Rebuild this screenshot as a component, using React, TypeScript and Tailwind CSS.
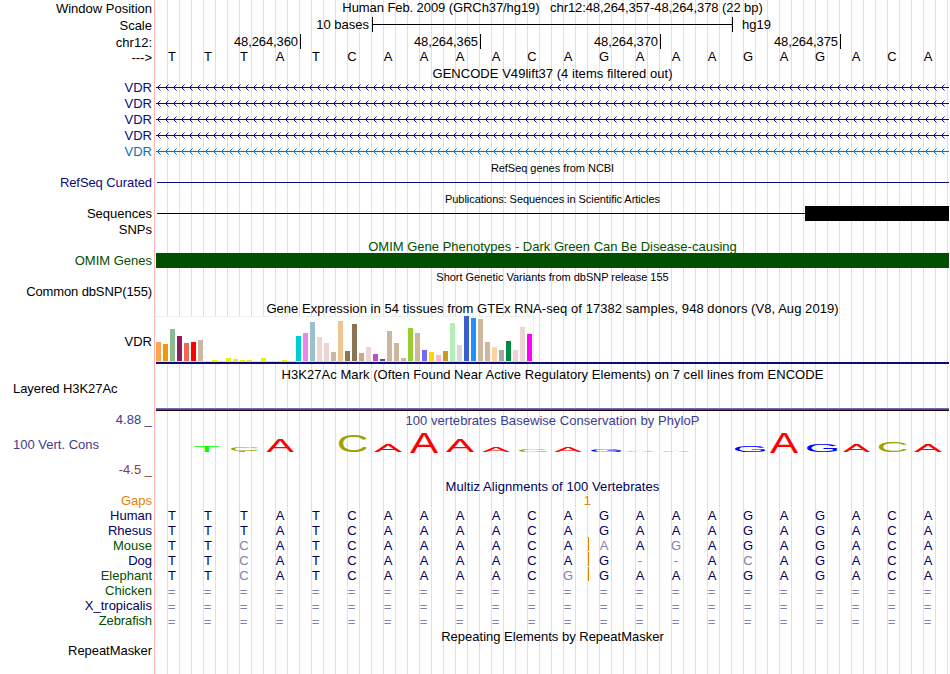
import React from "react";

type Line = { mt: string; text: string; cls?: string };

const NAVY = "text-[#0c0c78]";
const DARK = "text-[#000060]";
const GREEN = "text-[#005000]";

// Side labels, top to bottom; mt is the gap above each 15px line.
const LABELS: Line[] = [
  { mt: "mt-px", text: "Window Position" },
  { mt: "mt-[2px]", text: "Scale" },
  { mt: "mt-[2px]", text: "chr12:" },
  { mt: "mt-0", text: "--->" },
  { mt: "mt-[15px]", text: "VDR", cls: NAVY },
  { mt: "mt-px", text: "VDR", cls: NAVY },
  { mt: "mt-px", text: "VDR", cls: NAVY },
  { mt: "mt-px", text: "VDR", cls: NAVY },
  { mt: "mt-px", text: "VDR", cls: "text-[#1070b0]" },
  { mt: "mt-4", text: "RefSeq Curated", cls: "tracking-[-0.08px] text-[#0c0c78]" },
  { mt: "mt-4", text: "Sequences" },
  { mt: "mt-px", text: "SNPs" },
  { mt: "mt-4", text: "OMIM Genes", cls: GREEN },
  { mt: "mt-4", text: "Common dbSNP(155)", cls: "tracking-[-0.12px]" },
  { mt: "mt-[35px]", text: "VDR" },
  { mt: "mt-8", text: "Layered H3K27Ac", cls: "self-start ml-[13px] tracking-[-0.07px]" },
  { mt: "mt-4", text: "4.88 _", cls: "text-[#3c3c8c]" },
  { mt: "mt-[10px]", text: "100 Vert. Cons", cls: "self-start ml-[13px] text-[#3c3c8c]" },
  { mt: "mt-[10px]", text: "-4.5 _", cls: "text-[#8c3c3c]" },
  { mt: "mt-4", text: "Gaps", cls: "text-[#e68200]" },
  { mt: "mt-0", text: "Human", cls: DARK },
  { mt: "mt-0", text: "Rhesus", cls: DARK },
  { mt: "mt-0", text: "Mouse", cls: GREEN },
  { mt: "mt-0", text: "Dog", cls: DARK },
  { mt: "mt-0", text: "Elephant", cls: GREEN },
  { mt: "mt-0", text: "Chicken", cls: GREEN },
  { mt: "mt-0", text: "X_tropicalis", cls: DARK },
  { mt: "mt-0", text: "Zebrafish", cls: "tracking-[-0.1px] text-[#005000]" },
  { mt: "mt-[15px]", text: "RepeatMasker", cls: "tracking-[-0.05px]" },
];

const SEQ = "TTTATCAAAACAGAAAGAGACA";

// Lower-case letters mark bases that differ from human.
const ALIGN: { seq: string; gap?: boolean }[] = [
  { seq: "TTTATCAAAACAGAAAGAGACA" },
  { seq: "TTTATCAAAACAGAAAGAGACA" },
  { seq: "TTcATCAAAACAaAgAGAGACA", gap: true },
  { seq: "TTcATCAAAACAG--AcAGACA", gap: true },
  { seq: "TTcATCAAAACgGAAAGAGACA", gap: true },
  { seq: "======================" },
  { seq: "======================" },
  { seq: "======================" },
];

const BARS: [number, string][] = [
  [19, "#ffa54f"], [17, "#ee9a00"], [32, "#8fbc8f"], [25, "#8b1c62"], [18, "#ee6a50"],
  [19, "#ff0000"], [21, "#cdb79e"], [0, "#eeee00"], [1, "#eeee00"], [0, "#eeee00"],
  [3, "#eeee00"], [2, "#eeee00"], [1, "#eeee00"], [1, "#eeee00"], [0, "#eeee00"],
  [3, "#eeee00"], [0, "#eeee00"], [0, "#eeee00"], [1, "#eeee00"], [0, "#eeee00"],
  [25, "#00cdcd"], [28, "#ee82ee"], [39, "#9ac0cd"], [24, "#eed5d2"], [18, "#eed5d2"],
  [9, "#cdb79e"], [40, "#eec591"], [10, "#8b7355"], [37, "#8b7355"], [8, "#cdaa7d"],
  [14, "#eed5d2"], [7, "#b452cd"], [2, "#7a378b"], [30, "#cdb79e"], [18, "#cdb79e"],
  [3, "#cdb79e"], [33, "#9acd32"], [28, "#cdb79e"], [11, "#7a67ee"], [9, "#ffd700"],
  [6, "#ffb6c1"], [10, "#cd9b1d"], [38, "#b4eeb4"], [16, "#d9d9d9"], [45, "#3a5fcd"],
  [43, "#1e90ff"], [42, "#cdb79e"], [19, "#cdb79e"], [14, "#ffd39b"], [11, "#a6a6a6"],
  [20, "#008b45"], [11, "#eed5d2"], [34, "#eed5d2"], [27, "#ff00ff"],
];

// Conservation logo: letter, left, right, top, bottom.
const LOGO: [string, number, number, number, number][] = [
  ["T", 194, 219.7, 446, 452], ["C", 231, 258.7, 447.3, 451],
  ["A", 266.7, 294, 440, 452], ["C", 339, 367, 436, 452.7], ["A", 374.3, 402, 444, 452],
  ["A", 410, 438, 433, 453], ["A", 446, 474, 440, 452], ["A", 482, 510, 447, 452],
  ["C", 519, 547, 449, 452], ["A", 554, 582, 447, 452], ["G", 591, 621, 449, 452],
  ["A", 626, 654, 450.8, 452], ["A", 662, 690, 450.8, 452], ["G", 735, 765, 446, 452],
  ["A", 770, 798, 433, 453], ["G", 807, 837, 444, 452], ["A", 843, 870, 444, 452],
  ["C", 879, 907, 442, 452.5], ["A", 914, 942, 444, 452],
];

// Ink extents in em: left, right, below baseline, above baseline.
const INK: Record<string, [number, number, number, number]> = {
  A: [0.002, 0.665, 0, 0.688],
  C: [0.05, 0.685, 0.01, 0.698],
  G: [0.05, 0.71, 0.01, 0.698],
  T: [0.022, 0.588, 0, 0.688],
};
const LOGO_COLOR: Record<string, string> = { A: "#ff0000", C: "#a0a000", G: "#0000ff", T: "#00ff00" };

function Title({ children, className = "" }: { children: React.ReactNode; className?: string }) {
  return (
    <div className={"ml-px w-[793px] shrink-0 text-center leading-[15px] whitespace-pre " + className}>{children}</div>
  );
}

function Bases({ seq, className = "" }: { seq: string; className?: string }) {
  return (
    <div className={"-ml-px flex h-[15px] shrink-0 leading-[15px] " + className}>
      {seq.split("").map((c, i) => {
        const faint = c !== c.toUpperCase() || c === "=" || c === "-";
        return (
          <span
            key={i}
            className={"w-9 text-center " + (faint ? "text-[#8080b0] " : "") + (c === "=" ? "pt-px pr-px" : "")}
          >
            {c.toUpperCase()}
          </span>
        );
      })}
    </div>
  );
}

function Strand({ color, mt }: { color: string; mt: string }) {
  const arrows = Array.from({ length: 99 }, (_, i) => {
    const x = 1.5 + i * 8;
    return `M${x + 3} 0.5L${x} 3.5L${x + 3} 6.5`;
  }).join("");
  return (
    <svg className={"ml-px block shrink-0 " + mt} width="793" height="7" fill="none" stroke={color}>
      <path d={arrows} strokeWidth="1" />
      <path d="M0 3.5H793" shapeRendering="crispEdges" />
    </svg>
  );
}

function Ruler() {
  return (
    <div className="mt-[2px] flex h-[15px] shrink-0 leading-[15px]">
      <span className="w-[214px] text-right">10 bases</span>
      <div className="ml-[3px] flex w-[361px] items-center border-x border-black">
        <div className="h-px w-full bg-black" />
      </div>
      <span className="ml-[9px]">hg19</span>
    </div>
  );
}

function Ticks() {
  return (
    <div className="mt-[2px] flex h-[15px] shrink-0 leading-[16px] tracking-[-0.1px]">
      {["48,264,360", "48,264,365", "48,264,370", "48,264,375"].map((t, i) => (
        <div
          key={t}
          className={"h-[15px] border-r border-black pr-[2px] text-right " + (i === 0 ? "w-[146px]" : "w-[180px]")}
        >
          {t}
        </div>
      ))}
    </div>
  );
}

function Logo() {
  return (
    <svg className="block h-[24px] w-[795px] shrink-0 overflow-visible" viewBox="155 430 795 24">
      <path d="M239 451.5h6" stroke="#00ff00" />
      {LOGO.map(([c, x0, x1, y0, y1], i) => {
        const [l, r, b, t] = INK[c];
        const sx = (x1 - x0) / ((r - l) * 100);
        const sy = (y1 - y0) / ((b + t) * 100);
        return (
          <text
            key={i}
            fontSize="100"
            fill={LOGO_COLOR[c]}
            transform={`translate(${x0 - l * 100 * sx} ${y1 - b * 100 * sy}) scale(${sx} ${sy})`}
          >
            {c}
          </text>
        );
      })}
    </svg>
  );
}

export default function App() {
  return (
    <div className="flex h-[674px] w-[950px] overflow-hidden bg-white font-['Liberation_Sans',Arial,sans-serif] text-[13px] text-black">
      <div className="flex w-[152px] shrink-0 flex-col items-end">
        {LABELS.map((l, i) => (
          <div key={i} className={`h-[15px] shrink-0 leading-[15px] whitespace-pre ${l.mt} ${l.cls ?? ""}`}>
            {l.text}
          </div>
        ))}
      </div>

      <div className="ml-[2px] w-px shrink-0 bg-[#ffb4b4]" />

      <div className="flex w-[795px] shrink-0 flex-col bg-[repeating-linear-gradient(to_right,transparent_0px,transparent_11px,#dcdcff_11px,#dcdcff_12px)] bg-[position:1px_0px]">
        <Title className="tracking-[-0.08px]">Human Feb. 2009 (GRCh37/hg19)   chr12:48,264,357-48,264,378 (22 bp)</Title>
        <Ruler />
        <Ticks />
        <Bases seq={SEQ} />
        <Title className="mt-[2px] tracking-[0.04px]">GENCODE V49lift37 (4 items filtered out)</Title>

        <Strand color="#0c0c78" mt="mt-[3px]" />
        <Strand color="#0c0c78" mt="mt-[9px]" />
        <Strand color="#0c0c78" mt="mt-[9px]" />
        <Strand color="#0c0c78" mt="mt-[9px]" />
        <Strand color="#1070b0" mt="mt-[9px]" />

        <Title className="mt-[6px] text-[11px] tracking-[-0.04px]">RefSeq genes from NCBI</Title>
        <div className="mt-[6px] ml-[2px] h-px w-[792px] shrink-0 bg-[#0c0c78]" />

        <Title className="mt-[9px] text-[11px] tracking-[-0.06px]">Publications: Sequences in Scientific Articles</Title>
        <div className="-mt-px ml-[2px] flex h-[15px] w-[792px] shrink-0 items-center">
          <div className="h-px flex-1 bg-black" />
          <div className="h-[15px] w-[144px] bg-black" />
        </div>

        <Title className={"mt-[18px] " + GREEN}>OMIM Gene Phenotypes - Dark Green Can Be Disease-causing</Title>
        <div className="-mt-px ml-px h-[15px] w-[793px] shrink-0 bg-[#005000]" />

        <Title className="mt-[2px] text-[11px] tracking-[-0.02px]">Short Genetic Variants from dbSNP release 155</Title>

        <Title className="mt-4 tracking-[0.055px]">Gene Expression in 54 tissues from GTEx RNA-seq of 17382 samples, 948 donors (V8, Aug 2019)</Title>
        <div className="ml-px flex h-[46px] w-[378px] shrink-0 items-end gap-[2px] border-b border-[#dcdcdc] bg-white shadow-[inset_-1px_1px_0_#f0f0f0]">
          {BARS.map(([h, color], i) => (
            <div key={i} className="w-[5px] shrink-0" style={{ height: h, backgroundColor: color }} />
          ))}
        </div>
        <div className="ml-px h-[2px] w-[793px] shrink-0 bg-[#0c0c78]" />

        <Title className="mt-[3px] tracking-[0.05px]">H3K27Ac Mark (Often Found Near Active Regulatory Elements) on 7 cell lines from ENCODE</Title>
        <div className="mt-[26px] ml-px h-px w-[793px] shrink-0 bg-[#6c6ca8]" />
        <div className="ml-px flex h-px w-[793px] shrink-0 bg-[#603c60]">
          <div className="w-[684px] bg-[#783c3c]" />
        </div>
        <div className="ml-px h-px w-[793px] shrink-0 bg-[#240018]" />

        <Title className="mt-[2px] tracking-[0.04px] text-[#3c3c8c]">100 vertebrates Basewise Conservation by PhyloP</Title>
        <div className="mt-[2px] shrink-0">
          <Logo />
        </div>

        <Title className={"mt-[25px] tracking-[0.08px] " + DARK}>Multiz Alignments of 100 Vertebrates</Title>
        <div className="-mt-px h-[15px] w-[436px] shrink-0 text-right leading-[15px] text-[#e68200]">1</div>
        {ALIGN.map((row, i) => (
          <div key={i} className={"relative h-[15px] shrink-0 " + DARK}>
            <Bases seq={row.seq} />
            {row.gap && <div className="absolute top-[-1px] left-[433px] h-[14px] w-px bg-[#e68200]" />}
          </div>
        ))}

        <Title className="mt-px">Repeating Elements by RepeatMasker</Title>
      </div>
    </div>
  );
}
